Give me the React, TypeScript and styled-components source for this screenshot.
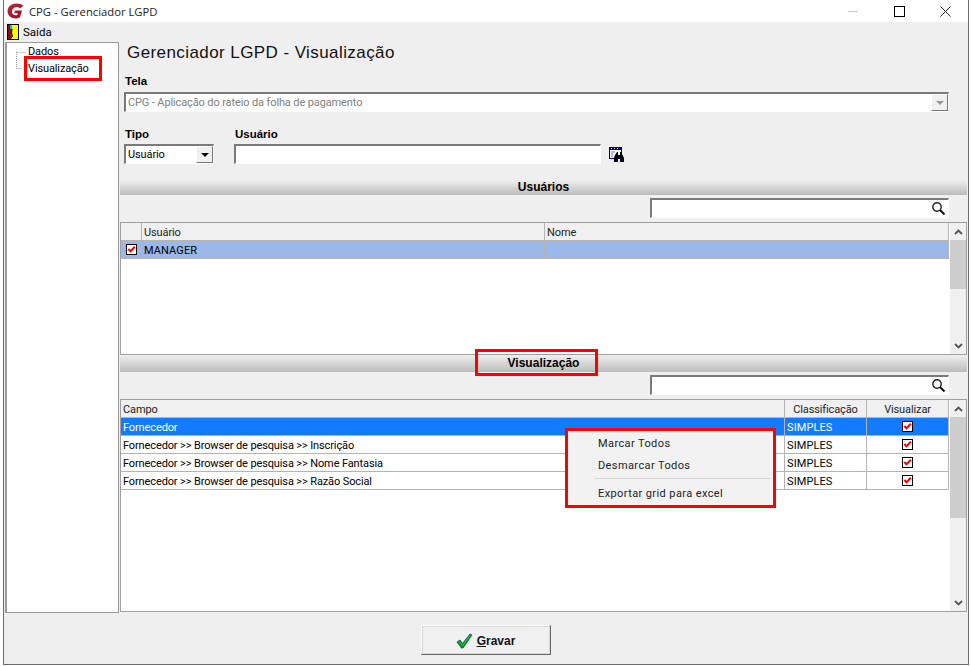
import React from "react";
import styled, { createGlobalStyle } from "styled-components";

const Global = createGlobalStyle`
  html, body { margin: 0; padding: 0; background: #fff; }
  * { box-sizing: border-box; }
  body { font-family: Roboto, "Liberation Sans", Arial, sans-serif; font-size: 11px; letter-spacing: -0.12px; color: #000; }
`;

const Win = styled.div`
  margin-left: 3px;
  width: 966px;
  height: 665px;
  border: 1px solid #6a6a6a;
  border-top: 0;
  background: #efefef;
  display: flex;
  flex-direction: column;
  position: relative;
`;
const TitleBar = styled.div`
  height: 22px;
  background: #fff;
  display: flex;
  align-items: center;
  padding-left: 3px;
  flex: none;
`;
const TitleText = styled.span`
  margin-left: 4px;
  font-family: "Open Sans", sans-serif;
  font-size: 11.25px;
  letter-spacing: 0;
  color: #222;
  flex: 1;
`;
const WinButton = styled.span`
  width: 46px;
  height: 22px;
  display: flex;
  align-items: center;
  justify-content: center;
`;
const WinButtons = styled.div`
  display: flex;
`;
const MenuBar = styled.div`
  height: 20px;
  display: flex;
  align-items: center;
  padding-left: 3px;
  gap: 4px;
  flex: none;
  font-size: 11.5px;
  letter-spacing: 0;
`;
const Body = styled.div`
  height: 572px;
  display: flex;
  padding-left: 1px;
  flex: none;
`;
const Tree = styled.div`
  width: 114px;
  height: 571px;
  background: #fff;
  border: 1px solid #999;
  border-left-width: 2px;
  flex: none;
  padding: 1px 0 0 17px;
  position: relative;
`;
const TreeLines = styled.svg`
  position: absolute;
  left: 9px;
  top: 9px;
`;
const TreeItem = styled.div<{ $marked?: boolean }>`
  width: 78px;
  height: ${(p) => (p.$marked ? "25px" : "12px")};
  line-height: ${(p) => (p.$marked ? "19px" : "16px")};
  font-size: 11px;
  padding-left: ${(p) => (p.$marked ? "1px" : "4px")};
  border: ${(p) => (p.$marked ? "3px solid #f00" : "0")};
  white-space: nowrap;
`;
const Main = styled.div`
  width: 848px;
  margin-left: 1px;
  display: flex;
  flex-direction: column;
  flex: none;
`;
const Heading = styled.h1`
  margin: 0;
  height: 31px;
  padding: 0 0 0 7px;
  font-family: "Liberation Sans", Arial, sans-serif;
  font-size: 17px;
  line-height: 22px;
  font-weight: 400;
  letter-spacing: 0.42px;
  color: #111;
  flex: none;
`;
const Label = styled.div`
  font-family: "Liberation Sans", Arial, sans-serif;
  font-weight: 700;
  font-size: 11.5px;
  letter-spacing: 0;
  line-height: 14px;
  height: 18px;
  padding: 0 0 4px 1px;
`;
const TelaBlock = styled.div`
  padding: 1px 0 0 4px;
  height: 45px;
  flex: none;
`;
const Sunken = styled.div<{ $w: number; $disabled?: boolean }>`
  width: ${(p) => p.$w}px;
  height: 20px;
  background: #fff;
  border: 1px solid #fff;
  border-top: 2px solid #7a7a7a;
  border-left: 2px solid #7a7a7a;
  display: flex;
  align-items: center;
  padding-left: 2px;
  color: ${(p) => (p.$disabled ? "#808080" : "#000")};
  white-space: nowrap;
  overflow: hidden;
  flex: none;
`;
const SelectText = styled.span`
  flex: 1;
`;
const ArrowButton = styled.span<{ $disabled?: boolean }>`
  width: 17px;
  height: 17px;
  background: #f0f0f0;
  border-right: 1px solid #777;
  border-bottom: 1px solid #777;
  border-top: 1px solid #fff;
  border-left: 1px solid #fff;
  display: flex;
  align-items: center;
  justify-content: center;
  &::after {
    content: "";
    border-left: 4px solid transparent;
    border-right: 4px solid transparent;
    border-top: 4px solid ${(p) => (p.$disabled ? "#999" : "#000")};
  }
`;
const FilterRow = styled.div`
  display: flex;
  height: 62px;
  padding: 9px 0 0 4px;
  flex: none;
`;
const Field = styled.div<{ $w: number }>`
  width: ${(p) => p.$w}px;
  flex: none;
`;
const FieldLabel = styled(Label)`
  height: 17px;
  padding-bottom: 3px;
`;
const UserField = styled.div`
  display: flex;
  align-items: flex-start;
  gap: 8px;
`;
const IconSlot = styled.span`
  padding-top: 3px;
  display: flex;
`;
const SectionBar = styled.div<{ $h: number }>`
  height: ${(p) => p.$h}px;
  background: linear-gradient(#efefef, #bcbcbc);
  display: flex;
  align-items: center;
  justify-content: center;
  font-family: "Liberation Sans", Arial, sans-serif;
  font-weight: 700;
  font-size: 12px;
  letter-spacing: 0;
  flex: none;
  position: relative;
  width: 847px;
`;
const SectionLabel = styled.span`
  line-height: 13px;
`;
const SectionMark = styled.span`
  position: absolute;
  left: 355px;
  top: -6px;
  width: 123px;
  height: 27px;
  border: 3px solid #f00;
`;
const SearchRow = styled.div`
  height: 27px;
  display: flex;
  justify-content: flex-end;
  padding: 3px 19px 0 0;
  flex: none;
`;
const SearchBox = styled(Sunken)`
  justify-content: flex-end;
  padding-right: 2px;
`;
const Grid = styled.div<{ $h: number }>`
  height: ${(p) => p.$h}px;
  width: 847px;
  background: #fff;
  border: 1px solid #a0a0a0;
  display: flex;
  flex: none;
`;
const GridTable = styled.div`
  flex: 1;
  min-width: 0;
  padding-right: 1px;
`;
const Row = styled.div<{ $cols: string; $tone?: "head" | "soft" | "strong" }>`
  display: grid;
  grid-template-columns: ${(p) => p.$cols};
  height: 18px;
  border-bottom: 1px solid #b4b4b4;
  background: ${(p) => (p.$tone === "head" ? "#f0f0f0" : p.$tone === "soft" ? "#9bb8e8" : p.$tone === "strong" ? "#127bff" : "#fff")};
  color: ${(p) => (p.$tone === "strong" ? "#fff" : p.$tone === "head" ? "#222" : "#000")};
`;
const Cell = styled.div<{ $center?: boolean; $caps?: boolean }>`
  border-right: 1px solid #b4b4b4;
  padding-left: ${(p) => (p.$center ? "0" : "2px")};
  height: 17px;
  line-height: 19px;
  letter-spacing: ${(p) => (p.$caps ? "0.1px" : "inherit")};
  white-space: nowrap;
  overflow: hidden;
  text-align: ${(p) => (p.$center ? "center" : "left")};
`;
const CheckCell = styled.div`
  border-right: 1px solid #b4b4b4;
  height: 17px;
  display: flex;
  align-items: center;
  justify-content: center;
`;
const ScrollBar = styled.div`
  width: 16px;
  background: #f0f0f0;
  display: flex;
  flex-direction: column;
  flex: none;
`;
const ScrollArrow = styled.span`
  height: 17px;
  display: flex;
  align-items: center;
  justify-content: center;
  flex: none;
`;
const ScrollThumb = styled.span<{ $h: number }>`
  height: ${(p) => p.$h}px;
  background: #cdcdcd;
  flex: none;
`;
const ScrollGap = styled.span`
  flex: 1;
`;
const Footer = styled.div`
  flex: 1;
  display: flex;
  padding: 11px 0 0 417px;
`;
const SaveButton = styled.button`
  width: 130px;
  height: 30px;
  background: #f0f0f0;
  border: 1px solid #fff;
  border-right: 2px solid #666;
  border-bottom: 2px solid #666;
  outline: 1px solid #d8d8d8;
  outline-offset: -2px;
  font-family: "Liberation Sans", Arial, sans-serif;
  font-size: 12px;
  font-weight: 700;
  display: flex;
  align-items: center;
  justify-content: center;
  gap: 4px;
  padding: 2px 0 0;
  color: #111;
`;
const Underlined = styled.span`
  text-decoration: underline;
`;
const ContextMenu = styled.div`
  position: absolute;
  left: 561px;
  top: 428px;
  width: 211px;
  height: 80px;
  background: #f2f2f2;
  border: 3px solid #f00;
  padding: 1px 2px 0 27px;
`;
const MenuItem = styled.div<{ $h: number }>`
  height: ${(p) => p.$h}px;
  padding-left: 3px;
  line-height: ${(p) => p.$h + 2}px;
  letter-spacing: 0.4px;
  color: #222;
`;
const MenuSep = styled.div`
  height: 1px;
  margin: 2px 0 3px 0;
  background: #d5d5d5;
`;

const Check = () => (
  <svg width="11" height="11" viewBox="0 0 11 11">
    <rect x="0.5" y="0.5" width="10" height="10" fill="#fff" stroke="#000" />
    <path d="M2.3 5 L4.5 7.3 L8.8 2.8" fill="none" stroke="#f00" strokeWidth="2" />
  </svg>
);
const Lens = () => (
  <svg width="15" height="15" viewBox="0 0 15 15">
    <circle cx="6" cy="6" r="4.2" fill="none" stroke="#222" strokeWidth="1.4" />
    <path d="M9 9 L13.5 13.5" stroke="#111" strokeWidth="2" />
  </svg>
);
const Chevron = ({ up }: { up?: boolean }) => (
  <svg width="9" height="6" viewBox="0 0 9 6">
    <path d={up ? "M1 5 L4.5 1.5 L8 5" : "M1 1 L4.5 4.5 L8 1"} fill="none" stroke="#555" strokeWidth="1.8" />
  </svg>
);
const Logo = () => (
  <svg width="18" height="16" viewBox="0 0 18 16">
    <defs>
      <linearGradient id="g" x1="0" y1="0" x2="1" y2="1">
        <stop offset="0" stopColor="#c8233c" />
        <stop offset="1" stopColor="#8c1428" />
      </linearGradient>
    </defs>
    <path d="M16.5 2.6 C13 .2 8 -.2 4.4 1.8 C.4 4 -.6 9 2 12.6 C4.6 15.8 9.8 16.2 13 14.2 L15 7.6 H8 L7.2 10.2 H10.8 L10.2 12 C7.8 12.8 5.2 11.6 5 9 C4.8 6 7.4 3.8 10 4 C11.4 4.1 12.4 4.7 13.2 5.4 Z" fill="url(#g)" />
  </svg>
);
const Door = () => (
  <svg width="12" height="16" viewBox="0 0 12 16">
    <rect x="0.5" y="0.5" width="11" height="15" fill="#ffff00" stroke="#000" />
    <path d="M1 1 H5 V4 L4 9 L5 12 L3 15 H1 Z" fill="#8a1010" />
    <path d="M3 1 H5 V5 H3 Z" fill="#00c8d8" />
    <path d="M5 5 L4.5 9 L5.5 12 L3.5 15" fill="none" stroke="#000" />
  </svg>
);
const Binoculars = () => (
  <svg width="16" height="16" viewBox="0 0 16 16">
    <rect x="0.5" y="0.5" width="12" height="11" fill="#fff" stroke="#000080" />
    <rect x="0" y="0" width="13" height="3" fill="#000080" />
    <path d="M2 1.5 H3 M5 1.5 H6 M8 1.5 H9" stroke="#fff" />
    <path d="M2 5 H6 M2 7 H4 M2 9 H4" stroke="#5a7fb8" />
    <path d="M6 8 L8 5 H9 V8 H11 V5 H12 L15 11 V15 H11 V11 H9 V15 H5 V11 Z" fill="#000" />
  </svg>
);
const GreenCheck = () => (
  <svg width="17" height="16" viewBox="0 0 17 16">
    <path d="M1 9 L4 7 L6.5 10.5 L14 1 L16 2 L7 15 L5.5 15 Z" fill="#00a000" stroke="#003080" strokeWidth="0.7" />
    <path d="M3 8.5 L6.5 12.5 L14.5 2" fill="none" stroke="#30d030" strokeWidth="1" />
  </svg>
);

const userCols = "21px 403px 1fr";
const fieldCols = "664px 82px 1fr";
const fields: [string, boolean][] = [
  ["Fornecedor", true],
  ["Fornecedor >> Browser de pesquisa >> Inscrição", false],
  ["Fornecedor >> Browser de pesquisa >> Nome Fantasia", false],
  ["Fornecedor >> Browser de pesquisa >> Razão Social", false],
];

const Scroll = ({ thumb }: { thumb: number }) => (
  <ScrollBar>
    <ScrollArrow><Chevron up /></ScrollArrow>
    <ScrollThumb $h={thumb} />
    <ScrollGap />
    <ScrollArrow><Chevron /></ScrollArrow>
  </ScrollBar>
);

export default function App() {
  return (
    <>
      <Global />
      <Win>
        <TitleBar>
          <Logo />
          <TitleText>CPG - Gerenciador LGPD</TitleText>
          <WinButtons>
            <WinButton>
              <svg width="11" height="11" viewBox="0 0 11 11"><path d="M0 5.5 H10" stroke="#c8c8c8" /></svg>
            </WinButton>
            <WinButton>
              <svg width="11" height="11" viewBox="0 0 11 11"><rect x="0.5" y="0.5" width="10" height="10" fill="none" stroke="#000" /></svg>
            </WinButton>
            <WinButton>
              <svg width="11" height="11" viewBox="0 0 11 11"><path d="M0.5 0.5 L10.5 10.5 M10.5 0.5 L0.5 10.5" stroke="#222" /></svg>
            </WinButton>
          </WinButtons>
        </TitleBar>
        <MenuBar><Door /><span>Saída</span></MenuBar>
        <Body>
          <Tree>
            <TreeLines width="10" height="20" viewBox="0 0 10 20">
              <path d="M0.5 0 V17 M0.5 0.5 H10 M0.5 16.5 H6" stroke="#999" strokeDasharray="1 1" fill="none" />
            </TreeLines>
            <TreeItem>Dados</TreeItem>
            <TreeItem $marked>Visualização</TreeItem>
          </Tree>
          <Main>
            <Heading>Gerenciador LGPD - Visualização</Heading>
            <TelaBlock>
              <Label>Tela</Label>
              <Sunken $w={825} $disabled>
                <SelectText>CPG - Aplicação do rateio da folha de pagamento</SelectText>
                <ArrowButton $disabled />
              </Sunken>
            </TelaBlock>
            <FilterRow>
              <Field $w={110}>
                <FieldLabel>Tipo</FieldLabel>
                <Sunken $w={90}>
                  <SelectText>Usuário</SelectText>
                  <ArrowButton />
                </Sunken>
              </Field>
              <Field $w={400}>
                <FieldLabel>Usuário</FieldLabel>
                <UserField>
                  <Sunken $w={367} />
                  <IconSlot><Binoculars /></IconSlot>
                </UserField>
              </Field>
            </FilterRow>
            <SectionBar $h={15}><SectionLabel>Usuários</SectionLabel></SectionBar>
            <SearchRow><SearchBox $w={299}><Lens /></SearchBox></SearchRow>
            <Grid $h={133}>
              <GridTable>
                <Row $cols={userCols} $tone="head">
                  <Cell /><Cell>Usuário</Cell><Cell>Nome</Cell>
                </Row>
                <Row $cols={userCols} $tone="soft">
                  <CheckCell><Check /></CheckCell><Cell $caps>MANAGER</Cell><Cell />
                </Row>
              </GridTable>
              <Scroll thumb={49} />
            </Grid>
            <SectionBar $h={17}>
              <SectionLabel>Visualização</SectionLabel>
              <SectionMark />
            </SectionBar>
            <SearchRow><SearchBox $w={299}><Lens /></SearchBox></SearchRow>
            <Grid $h={213}>
              <GridTable>
                <Row $cols={fieldCols} $tone="head">
                  <Cell>Campo</Cell><Cell $center>Classificação</Cell><Cell $center>Visualizar</Cell>
                </Row>
                {fields.map(([name, active]) => (
                  <Row key={name} $cols={fieldCols} $tone={active ? "strong" : undefined}>
                    <Cell>{name}</Cell><Cell $caps>SIMPLES</Cell><CheckCell><Check /></CheckCell>
                  </Row>
                ))}
              </GridTable>
              <Scroll thumb={101} />
            </Grid>
          </Main>
        </Body>
        <Footer>
          <SaveButton><GreenCheck /><span><Underlined>G</Underlined>ravar</span></SaveButton>
        </Footer>
        <ContextMenu>
          <MenuItem $h={22}>Marcar Todos</MenuItem>
          <MenuItem $h={22}>Desmarcar Todos</MenuItem>
          <MenuSep />
          <MenuItem $h={22}>Exportar grid para excel</MenuItem>
        </ContextMenu>
      </Win>
    </>
  );
}
